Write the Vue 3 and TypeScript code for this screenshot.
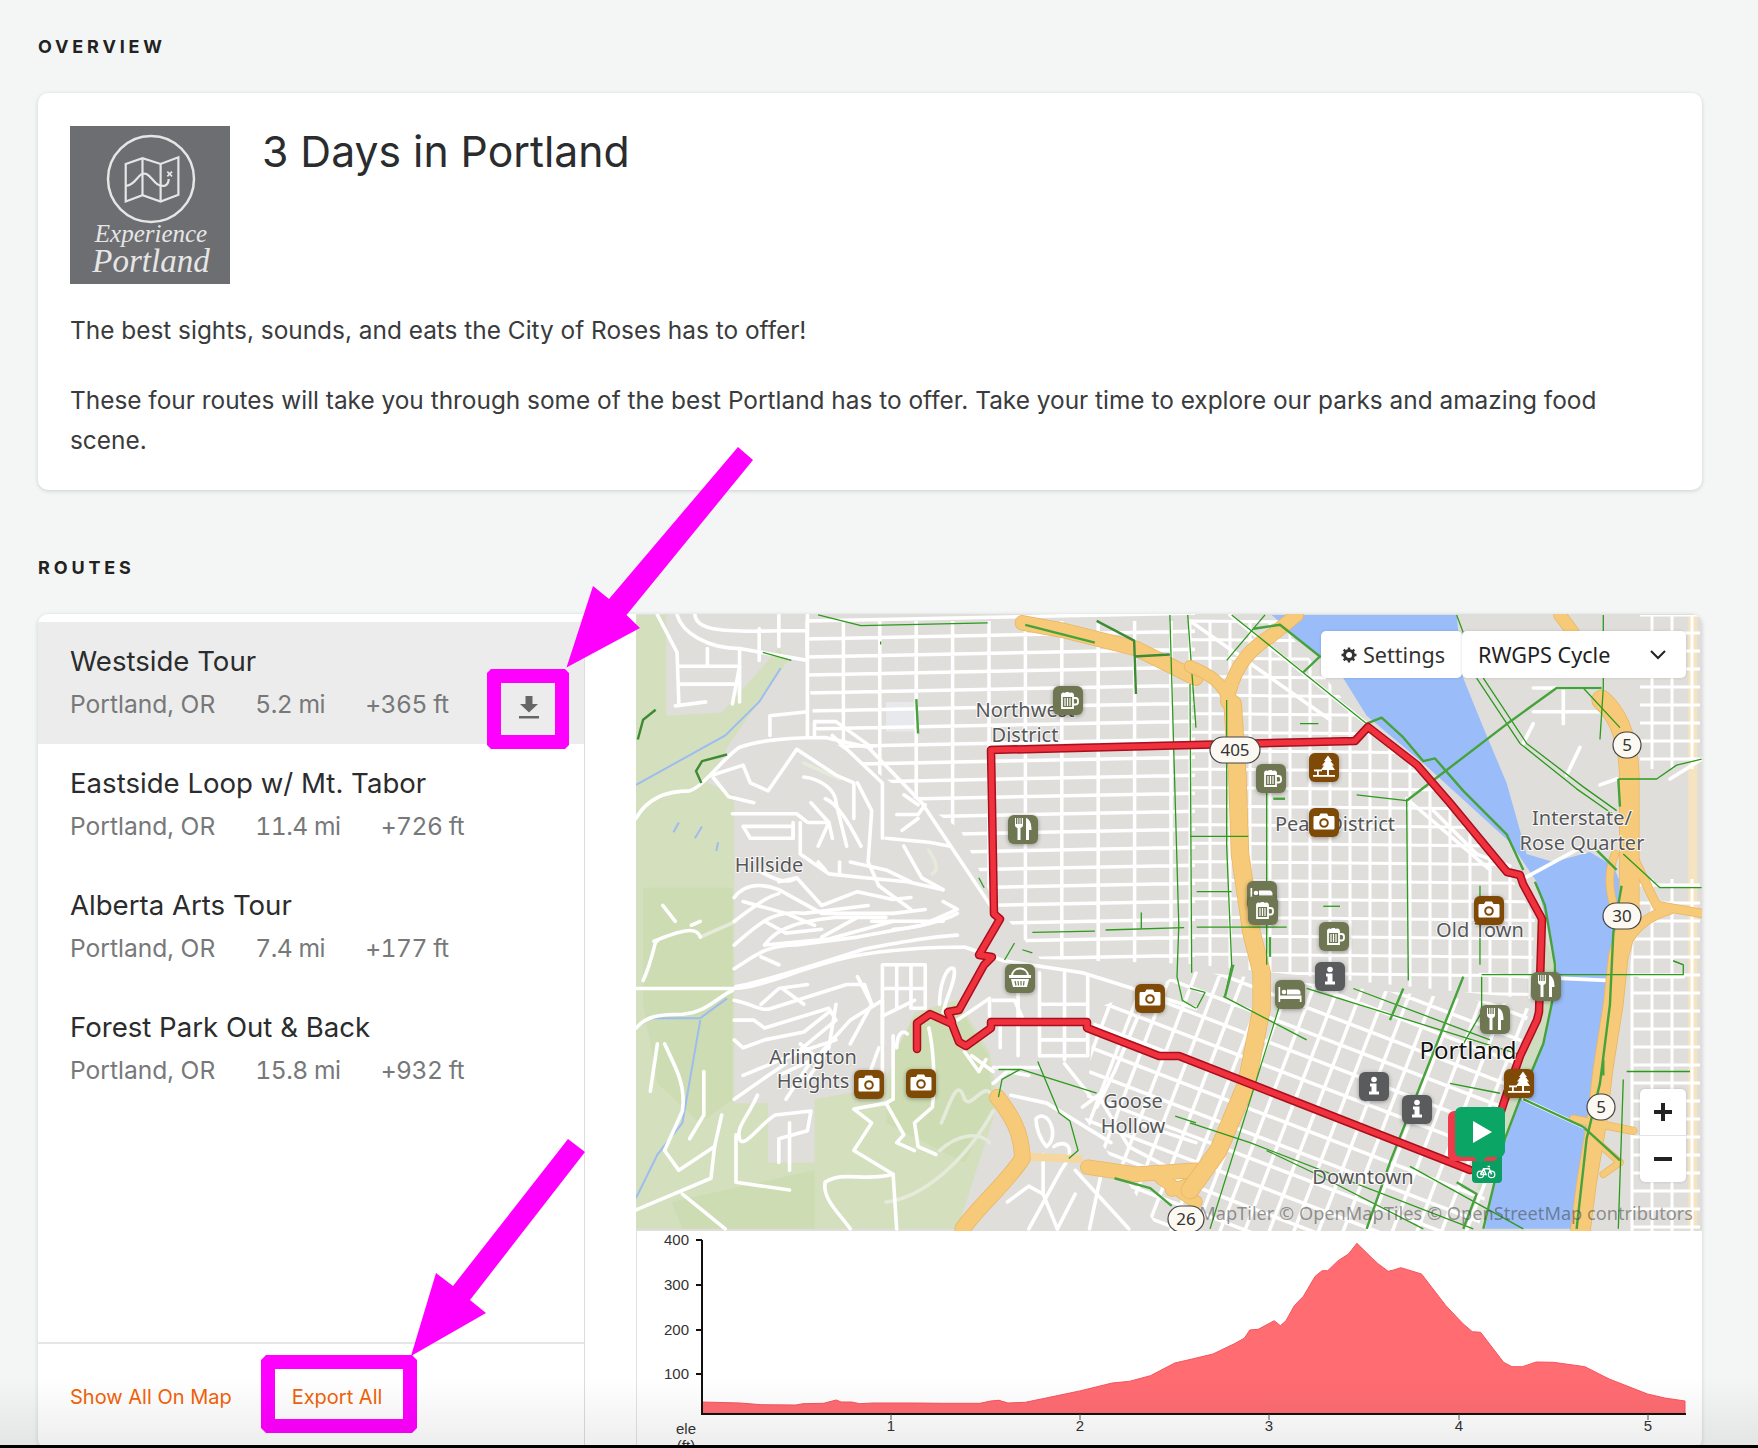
<script setup lang="ts">
// map data is written in the coordinates of two crops, see the groups in the template
interface Route { name: string; place: string; dist: string; gain: string }
interface Marker { x: number; y: number; icon: string; tone: string }
interface MapLabel { x: number; y: number; text: string }
interface Shield { x: number; y: number; w: number; text: string }

const routes: Route[] = [
  { name: 'Westside Tour', place: 'Portland, OR', dist: '5.2 mi', gain: '+365 ft' },
  { name: 'Eastside Loop w/ Mt. Tabor', place: 'Portland, OR', dist: '11.4 mi', gain: '+726 ft' },
  { name: 'Alberta Arts Tour', place: 'Portland, OR', dist: '7.4 mi', gain: '+177 ft' },
  { name: 'Forest Park Out & Back', place: 'Portland, OR', dist: '15.8 mi', gain: '+932 ft' }
]

function grid(x0: number, x1: number, dx: number, y0: number, y1: number, dy: number, drift = 0): string {
  let d = ''
  for (let x = x0; x <= x1; x += dx) d += `M${x} ${y0}V${y1}`
  for (let y = y0; y <= y1; y += dy) d += `M${x0} ${y}L${x1} ${y + (x1 - x0) * drift}`
  return d
}

const gridNw = grid(807, 1195, 36.4, 622, 985, 18, -0.02)
const gridPearl = grid(1190, 1540, 20, 622, 1015, 18.5, 0.01)
const gridDown = grid(1000, 1700, 23, 800, 1400, 23)
const gridEast = grid(1632, 1700, 20, 616, 1232, 18)

const parks = [
  'M0 15L85 15L85 270L240 262L400 100L425 130L340 240L262 340L200 440L275 470L275 1250L370 1250L370 1400L500 1400L500 1240L690 1210L780 1020L900 990L990 1120L1010 1230L1000 1290L900 1568L0 1568Z'
]
const parksDark = [
  'M20 705L270 705L270 1240L180 1300L60 1200L20 1000Z',
  'M100 1500L500 1420L500 1568L130 1568Z',
  'M780 1030L900 1000L985 1130L1000 1260L920 1400L700 1300L720 1130Z'
]

const motorZ4 = [
  { d: 'M1082 35L1200 55L1400 100L1568 175', w: 14 },
  { d: 'M1012 1235C1050 1280 1080 1320 1082 1390C1040 1450 960 1510 915 1568', w: 15 },
  { d: 'M1265 1412L1400 1430L1568 1420', w: 14 },
  { d: 'M1470 1440L1568 1500', w: 12 },
  { d: 'M1500 1470L1568 1450', w: 12 }
]
const motorPale = 'M1090 1385L1250 1392'
const motorZ5 = [
  { d: 'M0 145C60 165 105 190 115 235', w: 11 },
  { d: 'M320 15L240 70C170 105 125 160 112 235', w: 13 },
  { d: 'M128 240L142 420L150 620L185 820L215 920L215 1010L170 1200L85 1370L0 1470', w: 17 },
  { d: 'M1110 15L1150 60', w: 12 },
  { d: 'M1235 230C1290 270 1315 340 1318 420L1318 780L1285 880L1270 1000L1240 1160L1220 1300L1190 1450L1172 1568', w: 19 },
  { d: 'M1320 610L1400 750L1535 770', w: 8 },
  { d: 'M1320 830C1350 790 1400 770 1440 760', w: 9 },
  { d: 'M1275 620C1255 660 1255 710 1275 760', w: 7 },
  { d: 'M1150 1290L1330 1320', w: 7 },
  { d: 'M1210 1340L1290 1400L1240 1430', w: 6 }
]

const roadsZ4 = [
  'M60 15L115 110L120 240', 'M120 145L290 145L270 240', 'M120 190L290 190', 'M115 15C130 60 200 100 290 100L480 130',
  'M200 100L200 145', 'M290 100L290 235', 'M345 50L345 130', 'M110 245L195 235', 'M165 15C170 50 220 60 400 55L480 55',
  'M400 15L400 95', 'M480 15L480 320',
  'M375 320V270L480 260', 'M0 530C30 480 80 460 150 460C190 450 250 370 290 350C350 330 450 325 530 325L650 350L800 490L1000 760',
  'M500 320V285H560L660 350', 'M550 320L690 440L690 580', 'M215 420L300 395L320 440L370 460L450 355L560 420L610 440V530',
  'M215 425L260 475L330 490', 'M470 425C520 430 560 460 560 490L590 600', 'M270 518H450L480 540L540 540L550 580',
  'M490 490L540 540L510 600', 'M530 480C560 490 590 530 630 600', 'M620 440L660 510L650 640L680 700', 'M300 550H440V580H320L300 550',
  'M440 540V580', 'M460 540V620L540 670L640 680L760 690L860 710', 'M510 640L530 660', 'M570 640V670', 'M750 600L800 680L860 710',
  'M700 580L820 590L880 600', 'M730 520H790L810 495', 'M750 470L790 495', 'M745 560L790 530',
  'M275 730C300 700 340 690 400 710L520 770L720 770L810 760', 'M400 690L450 680L520 750L620 715L720 735L770 730',
  'M275 790C320 760 360 730 400 720', 'M275 850C340 800 380 760 470 770L650 750', 'M360 850C400 800 470 790 560 780L700 780',
  'M275 910C330 880 360 850 450 850L620 830L800 800L900 760L860 740', 'M350 880L400 900', 'M360 850L540 835L720 790',
  'M520 830L620 780', 'M660 790L860 790', 'M900 770C860 790 770 810 720 810',
  'M0 960L270 960C350 960 450 910 600 880C700 860 850 855 920 855L1030 890L1250 920L1568 1010',
  'M280 955C350 945 500 900 640 860C760 840 820 830 900 825', 'M0 1060C30 1030 60 1025 130 1025C200 1020 230 980 270 965',
  'M275 990C330 1000 350 1020 380 1010L590 950L640 950L660 1000L600 1100', 'M275 1040L330 1040L360 1060L540 1010L560 1040L440 1130',
  'M275 1090L300 1110L360 1090L470 1070L540 1020', 'M520 1120L600 1040L690 990V1100', 'M690 900V1170', 'M695 900H810V1010',
  'M730 900V1010', 'M695 960H810', 'M770 900V1010H810', 'M850 1000C850 950 870 900 890 910C900 930 870 980 860 1020',
  'M690 1030L780 990', 'M900 1040L990 985V1030', 'M1000 990H1060L1090 1050', 'M1000 1050H1090', 'M1020 1050V1110',
  'M730 1110C730 1080 745 1060 760 1075', 'M820 1060C830 1100 840 1180 830 1260L780 1300L790 1360L840 1380',
  'M720 1080V1240L700 1250L610 1265L660 1300L610 1370L720 1430L730 1568',
  'M700 1250L750 1330L730 1350L780 1370', 'M275 1240L370 1180L420 1150', 'M460 1100L500 1130L420 1240',
  'M340 1230C310 1290 280 1310 290 1340C300 1370 350 1300 390 1280L490 1270L480 1320L400 1340L400 1400',
  'M280 1330L280 1450L430 1470', 'M430 1300V1420', 'M80 1100C110 1160 140 1200 130 1270L80 1370L120 1420L220 1360',
  'M190 1170L190 1280L150 1340', 'M220 1360L210 1440L0 1520', 'M130 1480L250 1568', 'M50 840C120 815 170 800 180 830',
  'M20 940C50 880 50 840 60 840', 'M75 750L110 790', 'M155 800L180 790', 'M240 1280L220 1360',
  'M530 1450C580 1420 640 1450 720 1430', 'M530 1450C520 1490 570 1530 600 1568',
  'M1000 1160H1130', 'M1130 920V1130', 'M1070 900V1130', 'M1200 920V1140', 'M1265 930V1130', 'M1130 1090H1260', 'M1130 1130H1260', 'M1130 1000H1260',
  'M1050 1230L1150 1250L1330 1350', 'M1120 1290C1150 1260 1190 1330 1150 1360C1130 1340 1120 1310 1120 1290', 'M1170 1360C1200 1340 1240 1360 1190 1420',
  'M1190 1420L1100 1568', 'M1140 1380L1140 1480L1180 1568', 'M1230 1420L1380 1568', 'M1300 1440L1270 1568', 'M1300 1240L1380 1360L1568 1450',
  'M1400 1300L1568 1350', 'M640 1210L680 1110', 'M940 1130L1000 1170', 'M920 1120L960 1170L980 1140',
  'M340 660C380 680 420 700 450 680', 'M300 740L420 770L500 800', 'M360 790L420 820L520 810', 'M600 640L700 660L770 690', 'M680 700L770 760',
  'M410 960L470 1000', 'M350 1000L400 960L480 950', 'M300 1180L460 1120L560 1090', 'M400 1180L520 1130', 'M560 1000L540 1110L480 1190',
  'M620 930L660 1000', 'M1000 1200L1040 1170L1100 1180', 'M1200 1150L1270 1230', 'M1250 1260L1310 1220', 'M1420 1000L1340 1170L1290 1260',
  'M1230 1480L1180 1568', 'M1040 1500L1100 1460L1140 1480', 'M60 1100L40 1220'
]
const paleZ4 = ['M180 830L280 790', 'M820 610C840 640 850 660 830 670', 'M855 1300C880 1250 900 1180 920 1240C940 1270 980 1180 1000 1240', 'M850 1370C900 1330 960 1320 990 1350', 'M700 1500C800 1490 920 1400 1000 1270', 'M470 390L570 430']
const roadsZ5 = [
  'M120 15L530 290', 'M0 30L420 280', 'M870 925L1265 940', 'M1005 680L1180 600', 'M1000 1240L1180 1310', 'M1030 200H1230',
  'M1120 200V290', 'M1030 260H1230', 'M1030 290L1000 340', 'M1130 420L1170 350', 'M1230 445L1280 430', 'M730 510L860 620L960 650',
  'M650 480L900 660', 'M1440 430L1535 380', 'M1350 930H1480'
]

const bikeThin = [
  'M510 15L630 42L985 35', 'M685 82V90', 'M355 110L435 130', 'M1495 15L1520 800L1515 930L1530 990L1568 1010', 'M1545 15L1568 300',
  'M1110 818L1285 815', 'M1315 812L1535 806', 'M1415 768V808', 'M1032 888L1060 845', 'M1082 862L1110 870', 'M960 680L975 705',
  'M1015 1165H1080L1290 1225', 'M1015 1235L1025 1190L1075 1165', 'M1125 1145L1185 1275L1215 1295L1238 1370L1212 1390', 'M1510 1283L1568 1300'
]
const bikeThick = ['M785 228L790 315', 'M1090 40L1285 85', 'M1340 1440L1440 1465L1500 1510']
const bikeDark = ['M5 330L20 280L55 255', 'M183 440L168 410L185 385L255 368', 'M1290 30L1395 80L1400 215', 'M1395 120L1495 115']
const bikeThinZ5 = [
  'M125 15L530 290', 'M225 15L110 130', 'M110 230V600L125 900L105 980', 'M230 440V900', 'M0 190L5 920', 'M650 480L655 940', 'M0 575H175',
  'M500 470L650 485', 'M870 700V900', 'M875 925H1480V900L1450 890', 'M875 930V1020L820 1100', 'M350 960L1000 1130', 'M490 960L900 1090',
  'M270 1000L60 1568', 'M100 980L350 1090', 'M0 1300L180 1350L850 1568', 'M230 1370L380 1430L700 1568', 'M780 1200L930 1225', 'M0 960L45 970L20 1010',
  'M880 175L1010 340L1180 450L1280 510', 'M860 175L990 340L1160 455L1270 520', 'M1180 200L1290 300', 'M1285 430H1400L1460 395L1535 380',
  'M1300 620L1410 705H1535', 'M1240 15V200L1230 330', 'M800 15L820 60', 'M330 290H385', 'M400 752H450', 'M20 805H290', 'M20 715H125',
  'M1310 1170H1500', 'M1300 1190L1285 1568', 'M660 1410L1000 1568', 'M1450 890L1480 900'
]
const bikeThickZ5 = [
  'M190 50L270 40L390 120L340 160', 'M650 485L735 430L960 285L1100 200L1235 200', 'M530 290L575 275L640 325L700 385L735 378L820 460L950 570L1000 660',
  'M1035 690L1065 750L1095 900L1095 960L1060 1100L990 1240L945 1340L880 1568', 'M1000 1240L1180 1310L1290 1395', 'M1285 430L1290 500',
  'M1295 700L1270 820L1260 1000L1230 1200L1190 1340L1160 1568', 'M820 930L600 1400L530 1568', 'M640 960L600 1040', 'M1240 1140V1180',
  'M130 900L105 980', 'M240 830V880', 'M1220 610L1280 660', 'M800 1450L860 1480L820 1568', 'M250 480H285'
]

const markers: Marker[] = [
  { x: 1068, y: 701, icon: 'beer', tone: 'olive' }, { x: 1023, y: 830, icon: 'fork', tone: 'olive' },
  { x: 1020, y: 979, icon: 'basket', tone: 'olive' }, { x: 1150, y: 999, icon: 'camera', tone: 'brown' },
  { x: 869, y: 1085, icon: 'camera', tone: 'brown' }, { x: 921, y: 1084, icon: 'camera', tone: 'brown' },
  { x: 1271, y: 779, icon: 'beer', tone: 'olive' }, { x: 1324, y: 768, icon: 'tree', tone: 'brown' },
  { x: 1324, y: 823, icon: 'camera', tone: 'brown' }, { x: 1262, y: 896, icon: 'bed', tone: 'olive' },
  { x: 1263, y: 911, icon: 'beer', tone: 'olive' }, { x: 1334, y: 937, icon: 'beer', tone: 'olive' },
  { x: 1330, y: 977, icon: 'info', tone: 'slate' }, { x: 1290, y: 995, icon: 'bed', tone: 'olive' },
  { x: 1489, y: 911, icon: 'camera', tone: 'brown' }, { x: 1546, y: 987, icon: 'fork', tone: 'olive' },
  { x: 1495, y: 1020, icon: 'fork', tone: 'olive' }, { x: 1519, y: 1084, icon: 'tree', tone: 'brown' },
  { x: 1374, y: 1087, icon: 'info', tone: 'slate' }, { x: 1417, y: 1110, icon: 'info', tone: 'slate' }
]
const tones: Record<string, string> = { olive: '#6f7652', brown: '#7f4a06', slate: '#5a5b5d' }

const labels: MapLabel[] = [
  { x: 1025, y: 718, text: 'Northwest' }, { x: 1025, y: 743, text: 'District' }, { x: 769, y: 873, text: 'Hillside' },
  { x: 813, y: 1065, text: 'Arlington' }, { x: 813, y: 1089, text: 'Heights' }, { x: 1133, y: 1109, text: 'Goose' },
  { x: 1133, y: 1134, text: 'Hollow' }, { x: 1335, y: 832, text: 'Pearl District' }, { x: 1582, y: 826, text: 'Interstate/' },
  { x: 1582, y: 851, text: 'Rose Quarter' }, { x: 1480, y: 938, text: 'Old Town' }, { x: 1363, y: 1185, text: 'Downtown' }
]
const shields: Shield[] = [
  { x: 1235, y: 751, w: 50, text: '405' }, { x: 1627, y: 746, w: 28, text: '5' }, { x: 1622, y: 917, w: 38, text: '30' },
  { x: 1601, y: 1108, w: 28, text: '5' }, { x: 1186, y: 1220, w: 36, text: '26' }
]

const elevation = [
  [95, 549], [150, 552], [180, 557], [230, 558], [240, 554], [270, 553], [288, 543], [295, 549], [310, 549], [322, 554], [340, 552],
  [400, 552], [440, 553], [495, 553], [510, 546], [522, 544], [535, 552], [560, 550], [590, 537], [640, 515], [685, 492], [710, 487],
  [740, 470], [775, 432], [800, 420], [830, 405], [860, 375], [875, 358], [883, 333], [895, 331], [918, 305], [927, 320], [935, 305],
  [947, 260], [960, 232], [977, 172], [987, 155], [995, 155], [1010, 125], [1025, 105], [1037, 73], [1060, 120], [1068, 135], [1082, 157],
  [1090, 153], [1100, 146], [1110, 152], [1130, 165], [1165, 260], [1190, 315], [1203, 338], [1215, 340], [1248, 430], [1260, 443],
  [1275, 443], [1295, 429], [1320, 430], [1365, 443], [1400, 480], [1455, 525], [1480, 537], [1509, 546], [1509, 583], [95, 583]
]
const elevationPoints = elevation.map(([x, y]) => `${(636 + x / 1.4385).toFixed(1)},${(1220 + y / 3).toFixed(1)}`).join(' ')
const yTicks = [{ y: 1241, t: '400' }, { y: 1286, t: '300' }, { y: 1331, t: '200' }, { y: 1375, t: '100' }]
const xTicks = [{ x: 891, t: '1' }, { x: 1080, t: '2' }, { x: 1269, t: '3' }, { x: 1459, t: '4' }, { x: 1648, t: '5' }]

const routePath = 'M917 1050V1024L930 1015L952 1025L959 1043L966 1047L991 1029V1023H1087V1029L1159 1057L1179 1057L1470 1171'
const routePathB = 'M952 1023L948 1013L959 1011L984 966L992 958L979 956L1000 920L994 915L991 751L1355 742L1368 728L1417 766L1450 804L1507 873L1520 876L1523 885L1542 920L1539 1013L1537 1021L1520 1057L1505 1100L1497 1125'
</script>

<template>
  <div class="page">
    <h2 class="section-title">OVERVIEW</h2>
    <section class="card overview">
      <div class="overview-head">
        <svg class="logo" viewBox="70 126 160 158">
          <rect x="70" y="126" width="160" height="158" fill="#6d6e71" />
          <circle cx="151" cy="179" r="43" fill="none" stroke="#e6e6e6" stroke-width="2.5" />
          <g transform="translate(66 122) scale(.3355)" fill="none" stroke="#e6e6e6" stroke-width="6.5">
            <path d="M178 125L228 108L282 125L335 105V217L282 237L228 218L178 237Z" />
            <path d="M228 108V218M282 125V237" />
            <path d="M178 190C210 190 215 145 240 155C260 165 265 195 295 190C305 185 306 175 306 170" />
            <path d="M302 148L316 162M316 148L302 162" stroke-width="5" />
          </g>
          <text x="151" y="242" class="logo-small">Experience</text>
          <text x="151" y="272" class="logo-big">Portland</text>
        </svg>
        <h1 class="trip-title">3 Days in Portland</h1>
      </div>
      <p class="desc">The best sights, sounds, and eats the City of Roses has to offer!</p>
      <p class="desc second">These four routes will take you through some of the best Portland has to offer. Take your time to explore our parks and amazing food scene.</p>
    </section>

    <h2 class="section-title routes-title">ROUTES</h2>
    <section class="card routes-card">
      <div class="route-panel">
        <ul class="route-list">
          <li v-for="(r, i) in routes" :key="r.name" class="route-row" :class="{ active: i === 0 }">
            <div class="route-info">
              <div class="route-name">{{ r.name }}</div>
              <div class="route-meta">
                <span>{{ r.place }}</span>
                <span class="num">{{ r.dist }}</span>
                <span class="num">{{ r.gain }}</span>
              </div>
            </div>
            <button v-if="i === 0" class="download" type="button" aria-label="Export">
              <svg width="24" height="26" viewBox="0 0 24 26">
                <path d="M8.5 2h7v8h5.5L12 18.5 3 10h5.5Z" fill="#666" />
                <rect x="2" y="22" width="20" height="2.5" fill="#666" />
              </svg>
            </button>
          </li>
        </ul>
        <div class="panel-foot">
          <a class="foot-link">Show All On Map</a>
          <a class="foot-link">Export All</a>
        </div>
      </div>

      <div class="map-col">
        <div class="map">
          <svg class="map-svg" viewBox="636 615 1066 617" width="1066" height="617">
            <defs>
              <clipPath id="clip-nw"><path d="M800 615H1273L1363 725L1430 775L1507 870L1535 920L1530 1000L1190 965L1040 960L995 905L960 830L900 790L815 730Z" /></clipPath>
              <clipPath id="clip-down"><path d="M1095 1010L1190 972L1510 1005L1530 1010L1505 1100L1478 1232H1160L1085 1120Z" /></clipPath>
              <clipPath id="clip-east"><path d="M1640 616H1702V770H1640ZM1640 880H1702V1232H1590L1615 1100Z" /></clipPath>
              <g id="ic-beer">
                <path d="M-6-4H5V8H-6Z" fill="none" stroke="#fff" stroke-width="1.8" />
                <path d="M-7-4.5C-7-7-5-8-3.5-7C-2-8.5 1-8.5 2-7C4-8 6-7 6-4.5Z" fill="#fff" />
                <path d="M5-2H7.5A2.5 2.5 0 0 1 10 .5V2A2.5 2.5 0 0 1 7.5 4.5H5" fill="none" stroke="#fff" stroke-width="1.8" />
                <path d="M-3-2V6M-.5-2V6M2-2V6" stroke="#fff" stroke-width="1.2" />
              </g>
              <g id="ic-fork">
                <path d="M-8-11V-4C-8-2.5-7-1.5-5.5-1V11H-2.5V-1C-1-1.5 0-2.5 0-4V-11H-1.2V-5H-2.5V-11H-3.5V-5H-4.7V-11H-5.7V-5H-7V-11Z" fill="#fff" />
                <path d="M3-11C7-10 8.5-5 8.5 1H6V11H3Z" fill="#fff" />
              </g>
              <g id="ic-camera">
                <path d="M-9-6H-5L-3.5-8.5H3L4.5-6H9C10-6 10.5-5.5 10.5-4.5V6C10.5 7 10 7.5 9 7.5H-9C-10 7.5-10.5 7-10.5 6V-4.5C-10.5-5.5-10-6-9-6Z" fill="#fff" />
                <circle cx="0" cy="1" r="3.8" fill="none" stroke="currentColor" stroke-width="2" />
              </g>
              <g id="ic-tree" fill="#fff">
                <path d="M4-11.5L8-6H6.5L10-1.5H8L11 3H-3L0-1.5H-2L1.5-6H0Z" />
                <rect x="3" y="3" width="2" height="5" />
                <rect x="-10" y="2.5" width="8" height="1.8" />
                <rect x="-7" y="4" width="1.8" height="4" />
                <rect x="-11" y="8" width="22" height="1.8" />
              </g>
              <g id="ic-info" fill="#fff">
                <circle cx="0" cy="-6.5" r="2.8" />
                <path d="M-4-2.5H2.5V5.5H5V8.5H-5V5.5H-2.5V.5H-4Z" />
              </g>
              <g id="ic-bed" fill="#fff">
                <path d="M-11.5-7H-9.8V1.5H11.5V8H9.8V5H-9.8V8H-11.5Z" />
                <circle cx="-6" cy="-2" r="2.3" />
                <path d="M-3-4.5H7.5C9.5-4.5 10.5-3 10.5-1V.5H-3Z" />
              </g>
              <g id="ic-basket">
                <path d="M-8-2C-8-12 8-12 8-2" fill="none" stroke="#fff" stroke-width="1.8" />
                <path d="M-11-3H11V0H-11Z" fill="#fff" />
                <path d="M-9 1H9L7 9H-7Z" fill="#fff" />
                <path d="M-5 3L-4 7.5M-2 3L-1.5 7.5M1 3V7.5M4 3L3.5 7.5" stroke="currentColor" stroke-width="1.2" />
              </g>
              <g id="ic-bike" fill="none" stroke="#fff" stroke-width="1.5">
                <circle cx="-7" cy="3" r="4" />
                <circle cx="7" cy="3" r="4" />
                <path d="M-7 3L-3-4H4L7 3M-3-4L0 3H-7M2-7H5" />
              </g>
            </defs>

            <rect x="636" y="615" width="1066" height="617" fill="#dfdedb" />

            <g transform="translate(636 610) scale(.3571 .3953)">
              <path v-for="d in parks" :key="d" :d="d" fill="#d3dfbd" />
              <path v-for="d in parksDark" :key="d" :d="d" fill="#cddcb3" />
              <path d="M0 445L250 320L345 235L405 150" class="stream" />
              <path d="M0 1060L40 1035H180L255 985M180 1040L130 1300L60 1380L0 1490M105 565L120 540M165 580L185 550M225 612L230 590" class="stream" />
              <path d="M700 235H785V310H700Z" fill="#e8e9ec" />
            </g>

            <g transform="translate(1190 610) scale(.3333 .3953)">
              <path d="M245 15L460 175L530 270L700 390L960 590L1040 690L1090 860L1095 960L1060 1100L990 1240L940 1340L885 1568H1155L1190 1340L1260 1000L1270 810L1295 700L1270 650L1200 615L1090 640L1010 620L950 440L880 300L820 175L800 15Z" fill="#9abdf9" />
              <path d="M1040 790L1100 900L1095 960L1060 1100L990 1240L950 1340L880 1470L860 1470L930 1290L1040 1040Z" fill="#cfdcc0" />
              <path d="M1495 15H1522V1568H1495Z" fill="#f6e3c2" />
            </g>

            <g class="streets">
              <path :d="gridNw" clip-path="url(#clip-nw)" />
              <path :d="gridPearl" clip-path="url(#clip-nw)" class="thin" />
              <g clip-path="url(#clip-down)"><path :d="gridDown" transform="rotate(21 1350 1100)" /></g>
              <path :d="gridEast" clip-path="url(#clip-east)" class="thin" />
            </g>

            <g transform="translate(636 610) scale(.3571 .3953)">
              <path v-for="d in paleZ4" :key="d" :d="d" class="road pale" />
              <path v-for="d in roadsZ4" :key="d" :d="d" class="road" />
            </g>
            <g transform="translate(1190 610) scale(.3333 .3953)">
              <path v-for="d in roadsZ5" :key="d" :d="d" class="road" />
            </g>

            <g transform="translate(636 610) scale(.3571 .3953)">
              <path :d="motorPale" class="motor-pale" />
              <path v-for="m in motorZ4" :key="m.d" :d="m.d" class="motor-edge" :style="{ strokeWidth: m.w + 1.5 + 'px' }" />
              <path v-for="m in motorZ4" :key="m.d + 'f'" :d="m.d" class="motor" :style="{ strokeWidth: m.w + 'px' }" />
              <path v-for="d in bikeThin" :key="d" :d="d" class="bike" />
              <path v-for="d in bikeThick" :key="d" :d="d" class="bike thick" />
              <path v-for="d in bikeDark" :key="d" :d="d" class="bike dark" />
            </g>
            <g transform="translate(1190 610) scale(.3333 .3953)">
              <path v-for="m in motorZ5" :key="m.d" :d="m.d" class="motor-edge" :style="{ strokeWidth: m.w + 1.5 + 'px' }" />
              <path v-for="m in motorZ5" :key="m.d + 'f'" :d="m.d" class="motor" :style="{ strokeWidth: m.w + 'px' }" />
              <path v-for="d in bikeThinZ5" :key="d" :d="d" class="bike" />
              <path v-for="d in bikeThickZ5" :key="d" :d="d" class="bike thick" />
            </g>

            <text v-for="l in labels" :key="l.text" :x="l.x" :y="l.y" class="map-label">{{ l.text }}</text>

            <path :d="routePath" class="route-edge" />
            <path :d="routePathB" class="route-edge" />
            <path :d="routePath" class="route-line" />
            <path :d="routePathB" class="route-line" />

            <text x="1468" y="1060" class="map-label big">Portland</text>
            <text x="1693" y="1221" class="attribution">MapTiler © OpenMapTiles © OpenStreetMap contributors</text>

            <g v-for="s in shields" :key="s.x + s.text">
              <rect :x="s.x - s.w / 2" :y="s.y - 13" :width="s.w" height="26" rx="13" class="shield" />
              <text :x="s.x" :y="s.y + 6" class="shield-text">{{ s.text }}</text>
            </g>

            <g v-for="m in markers" :key="`${m.x}-${m.y}`" :transform="`translate(${m.x} ${m.y})`" :style="{ color: tones[m.tone] }">
              <rect x="-15" y="-14" width="30" height="29" rx="6" class="marker-box" :fill="tones[m.tone]" />
              <use :href="`#ic-${m.icon}`" />
            </g>

            <g>
              <rect x="1472" y="1150" width="30" height="34" rx="4" fill="#0b9e63" />
              <use href="#ic-bike" transform="translate(1486 1173) scale(.8)" />
              <rect x="1448" y="1112" width="50" height="50" rx="6" fill="#ee3a49" />
              <rect x="1455" y="1108" width="50" height="50" rx="6" fill="#0ba566" />
              <path d="M1473 1157H1488L1480 1165Z" fill="#0ba566" />
              <path d="M1473 1122L1492 1133L1473 1144Z" fill="#fff" />
            </g>
          </svg>

          <div class="map-controls">
            <button class="map-btn settings" type="button">
              <svg width="16" height="16" viewBox="0 0 16 16">
                <circle cx="8" cy="8" r="4.5" fill="none" stroke="#333" stroke-width="3" />
                <path d="M8 0.5V3M8 13V15.5M0.5 8H3M13 8H15.5M2.7 2.7L4.4 4.4M11.6 11.6L13.3 13.3M2.7 13.3L4.4 11.6M11.6 4.4L13.3 2.7" stroke="#333" stroke-width="2.4" />
              </svg>
              <span>Settings</span>
            </button>
            <button class="map-btn style-select" type="button">
              <span>RWGPS Cycle</span>
              <svg width="16" height="10" viewBox="0 0 16 10"><path d="M1 1L8 8L15 1" fill="none" stroke="#222" stroke-width="2" /></svg>
            </button>
          </div>
          <div class="zoom-ctrl">
            <div class="zoom-btn"><svg width="18" height="18" viewBox="0 0 18 18"><path d="M0 9H18M9 0V18" stroke="#222" stroke-width="4" /></svg></div>
            <div class="zoom-btn"><svg width="18" height="18" viewBox="0 0 18 18"><path d="M0 9H18" stroke="#222" stroke-width="4" /></svg></div>
          </div>
        </div>

        <svg class="chart" viewBox="636 1232 1066 218" width="1066" height="218">
          <polygon :points="elevationPoints" fill="#ff6c72" stroke="#f4555e" stroke-width="1" />
          <path d="M702 1241V1415H1686" fill="none" stroke="#111" stroke-width="2" />
          <g v-for="t in yTicks" :key="t.t">
            <path :d="`M696 ${t.y}H702`" stroke="#111" stroke-width="2" />
            <text x="689" :y="t.y + 5" class="tick-y">{{ t.t }}</text>
          </g>
          <g v-for="t in xTicks" :key="t.t">
            <path :d="`M${t.x} 1415V1421`" stroke="#555" stroke-width="1" />
            <text :x="t.x" y="1432" class="tick-x">{{ t.t }}</text>
          </g>
          <text x="686" y="1435" class="tick-x">ele</text>
          <text x="686" y="1452" class="tick-x">(ft)</text>
        </svg>
      </div>
    </section>

    <!-- screenshot annotations -->
    <svg class="annotations" viewBox="0 0 1758 1448" width="1758" height="1448">
      <polygon points="738,447 753,460 626.5,615 640,628 566.5,667.5 593,586 609,599" fill="#ff00ff" />
      <polygon points="568,1139 585,1152 470,1300 486,1313 411,1356 436,1273 453,1286" fill="#ff00ff" />
      <path d="M491 669H565L569 673V745L565 749H491L487 745V673ZM501 683V735H555V683Z" fill="#ff00ff" fill-rule="evenodd" />
      <path d="M266 1355H412L417 1360V1428L412 1433H266L261 1428V1360ZM275 1369V1419H403V1369Z" fill="#ff00ff" fill-rule="evenodd" />
    </svg>
    <div class="bottom-shade"></div>
    <div class="bottom-bar"></div>
  </div>
</template>

<style>
html, body {
  margin: 0;
  background: #f4f6f5;
}
</style>

<style scoped>
.page {
  position: relative;
  width: 1758px;
  height: 1448px;
  overflow: hidden;
  box-sizing: border-box;
  padding: 37px 56px 0 38px;
  background: #f4f6f5;
  font-family: Inter, "Liberation Sans", sans-serif;
  color: #2c2d2e;
}

.section-title {
  margin: 0 0 36px;
  font-size: 18px;
  line-height: 20px;
  font-weight: 700;
  letter-spacing: 3.85px;
  color: #222;
}

.routes-title {
  margin-top: 68px;
}

.card {
  background: #fff;
  border-radius: 10px;
  box-shadow: 0 1px 4px rgba(0, 0, 0, 0.16);
}

.overview {
  padding: 33px 32px 30px;
}

.overview-head {
  display: flex;
  gap: 32px;
}

.logo {
  width: 160px;
  height: 158px;
  flex: none;
}

.logo-small, .logo-big {
  font-family: "Liberation Serif", serif;
  font-style: italic;
  fill: #e6e6e6;
  text-anchor: middle;
}

.logo-small { font-size: 25px; }
.logo-big { font-size: 33px; }

.trip-title {
  margin: 0;
  font-size: 42.7px;
  line-height: 52px;
  font-weight: 400;
  color: #2b2c2d;
}

.desc {
  max-width: 1560px;
  margin: 26px 0 0;
  font-size: 24.4px;
  line-height: 40px;
  color: #3a3b3c;
}

.desc.second {
  margin-top: 30px;
}

.routes-card {
  display: flex;
  height: 835px;
  overflow: hidden;
}

.route-panel {
  width: 547px;
  flex: none;
  box-sizing: border-box;
  display: flex;
  flex-direction: column;
  padding-top: 8px;
  border-right: 1px solid #dcdcdc;
}

.route-list {
  flex: 1;
  margin: 0;
  padding: 0;
  list-style: none;
}

.route-row {
  display: flex;
  height: 122px;
  box-sizing: border-box;
  padding: 21px 28px 0 32px;
}

.route-row.active {
  background: #ececec;
}

.route-info {
  flex: 1;
}

.route-name {
  font-size: 27.6px;
  line-height: 36px;
  color: #2b2c2d;
  margin-bottom: 8px;
}

.route-meta {
  display: flex;
  gap: 40px;
  font-size: 24.6px;
  line-height: 34px;
  font-variant-numeric: tabular-nums;
  color: #77787a;
}

.num {
  letter-spacing: -0.45px;
}

.download {
  align-self: flex-end;
  width: 54px;
  height: 52px;
  margin-bottom: 10px;
  padding: 0;
  border: none;
  background: none;
}

.panel-foot {
  flex: none;
  display: flex;
  gap: 60px;
  height: 65px;
  padding: 40px 0 0 32px;
  border-top: 2px solid #e6e6e6;
}

.foot-link {
  font-size: 20px;
  line-height: 26px;
  color: #f26207;
}

.map-col {
  margin-left: 51px;
  width: 1066px;
}

.map {
  position: relative;
  width: 1066px;
  height: 617px;
  overflow: hidden;
}

.map-svg, .chart {
  display: block;
}

.chart {
  box-shadow: inset 1px 0 #e2e2e2;
}

.map-svg path {
  vector-effect: non-scaling-stroke;
}

.stream {
  fill: none;
  stroke: #9dbcf0;
  stroke-width: 2px;
}

.streets path {
  fill: none;
  stroke: #fff;
  stroke-width: 3.5px;
}

.streets path.thin {
  stroke-width: 3px;
}

.road {
  fill: none;
  stroke: #fff;
  stroke-width: 3.6px;
  stroke-linecap: round;
  stroke-linejoin: round;
}

.road.pale {
  stroke: #e6eadb;
}

.motor {
  fill: none;
  stroke: #f6ca78;
  stroke-linecap: round;
  stroke-linejoin: round;
}

.motor-edge {
  fill: none;
  stroke: #e9b566;
  stroke-linecap: round;
  stroke-linejoin: round;
}

.motor-pale {
  fill: none;
  stroke: #f4d8a0;
  stroke-width: 8px;
}

.bike {
  fill: none;
  stroke: #2c9a1b;
  stroke-width: 1.3px;
  stroke-linejoin: round;
}

.bike.thick {
  stroke: #46a23a;
  stroke-width: 2.4px;
}

.bike.dark {
  stroke: #3f8a34;
  stroke-width: 2.4px;
}

.map-label {
  font-family: "Noto Sans", sans-serif;
  font-size: 20px;
  fill: #565758;
  text-anchor: middle;
  paint-order: stroke;
  stroke: rgba(255, 255, 255, 0.85);
  stroke-width: 2px;
}

.map-label.big {
  font-size: 24px;
  fill: #111;
}

.attribution {
  font-family: "Noto Sans", sans-serif;
  font-size: 18.2px;
  fill: rgba(70, 70, 70, 0.55);
  text-anchor: end;
}

.shield {
  fill: #fbf9f1;
  stroke: #444;
  stroke-width: 1.2px;
}

.shield-text {
  font-family: "Noto Sans", sans-serif;
  font-size: 17px;
  fill: #333;
  text-anchor: middle;
}

.marker-box {
  filter: drop-shadow(0 1px 2px rgba(0, 0, 0, 0.35));
}

.route-edge {
  fill: none;
  stroke: #a80f1d;
  stroke-width: 8.5px;
  stroke-linejoin: round;
  stroke-linecap: round;
}

.route-line {
  fill: none;
  stroke: #f0323f;
  stroke-width: 5.5px;
  stroke-linejoin: round;
  stroke-linecap: round;
}

.map-controls {
  position: absolute;
  top: 17px;
  left: 685px;
  display: flex;
}

.map-btn {
  display: flex;
  align-items: center;
  height: 47px;
  border: none;
  background: #fff;
  border-radius: 5px;
  box-shadow: 0 0 3px rgba(0, 0, 0, 0.15);
  font-family: "Noto Sans", "Open Sans", sans-serif;
  font-size: 21.6px;
  color: #222;
}

.settings {
  width: 141px;
  padding: 0 0 0 20px;
  gap: 6px;
  color: #333;
}

.style-select {
  width: 224px;
  padding: 0 20px 0 16px;
  justify-content: space-between;
}

.zoom-ctrl {
  position: absolute;
  top: 475px;
  left: 1004px;
  width: 46px;
  background: #fff;
  border-radius: 5px;
  box-shadow: 0 0 3px rgba(0, 0, 0, 0.15);
}

.zoom-btn {
  display: flex;
  height: 46px;
  align-items: center;
  justify-content: center;
}

.zoom-btn + .zoom-btn {
  border-top: 1px solid #e4e4e4;
}

.chart text {
  font-family: "Liberation Sans", sans-serif;
  font-size: 15px;
  fill: #333;
}

.tick-y {
  text-anchor: end;
}

.tick-x {
  text-anchor: middle;
}

.annotations {
  position: absolute;
  top: 0;
  left: 0;
  pointer-events: none;
}

.bottom-shade {
  position: absolute;
  left: 0;
  right: 0;
  bottom: 0;
  height: 70px;
  background: linear-gradient(rgba(0, 0, 0, 0), rgba(0, 0, 0, 0.07));
  pointer-events: none;
}

.bottom-bar {
  position: absolute;
  left: 0;
  right: 0;
  bottom: 0;
  height: 3px;
  background: #000;
}
</style>
